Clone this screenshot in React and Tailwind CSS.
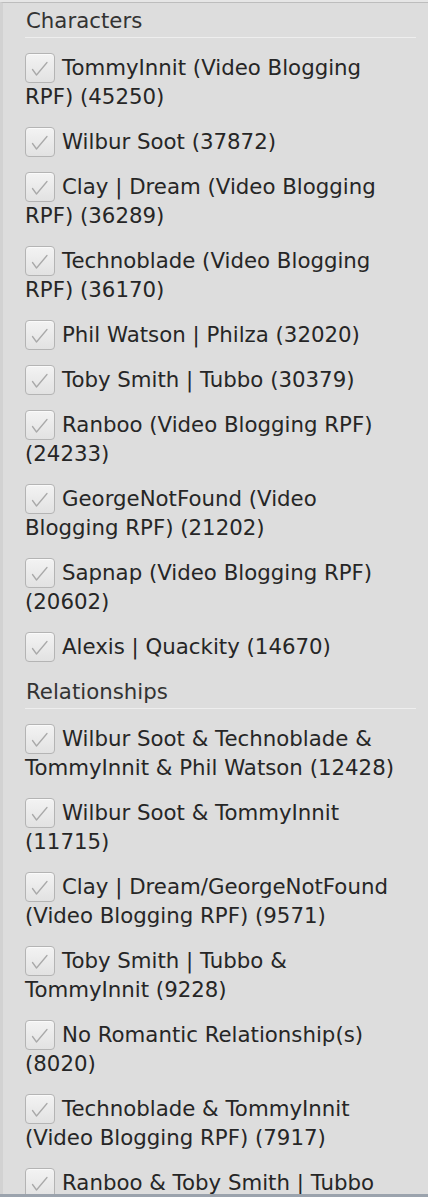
import React from "react";

const characters = [
  "TommyInnit (Video Blogging RPF) (45250)",
  "Wilbur Soot (37872)",
  "Clay | Dream (Video Blogging RPF) (36289)",
  "Technoblade (Video Blogging RPF) (36170)",
  "Phil Watson | Philza (32020)",
  "Toby Smith | Tubbo (30379)",
  "Ranboo (Video Blogging RPF) (24233)",
  "GeorgeNotFound (Video Blogging RPF) (21202)",
  "Sapnap (Video Blogging RPF) (20602)",
  "Alexis | Quackity (14670)",
];

const relationships = [
  "Wilbur Soot & Technoblade & TommyInnit & Phil Watson (12428)",
  "Wilbur Soot & TommyInnit (11715)",
  "Clay | Dream/GeorgeNotFound (Video Blogging RPF) (9571)",
  "Toby Smith | Tubbo & TommyInnit (9228)",
  "No Romantic Relationship(s) (8020)",
  "Technoblade & TommyInnit (Video Blogging RPF) (7917)",
  "Ranboo & Toby Smith | Tubbo (7204)",
  "Clay | Dream & TommyInnit (6831)",
];

// greyed-out checkbox, the way the filter sidebar draws it
const Check = () => (
  <span className="inline-block w-[30px] h-[30px] -my-[1px] align-[-7px] mr-[7px] rounded-[4px] border border-[#b4b4b4] bg-gradient-to-b from-[#f3f3f3] to-[#e2e2e2] shadow-[inset_0_1px_0_#fafafa]">
    <svg className="block" width="28" height="28" viewBox="0 0 28 28">
      <path
        d="M6.5 15.5 L10.5 21 L21 8.5"
        fill="none"
        stroke="#a9a9a9"
        strokeWidth="1.3"
        strokeLinecap="round"
        strokeLinejoin="round"
      />
    </svg>
  </span>
);

const Group = ({ title, items }) => (
  <div>
    <h3 className="leading-[29px] pb-[2px] pl-[1px] border-b border-[#eeeeee] mb-[15px] text-[#333]">
      {title}
    </h3>
    <ul>
      {items.map((item) => (
        <li key={item} className="leading-[29px] mb-[16px] pr-[14px]">
          <Check />
          {item}
        </li>
      ))}
    </ul>
  </div>
);

export default function App() {
  return (
    <div className="h-[1197px] overflow-hidden bg-[#e6e6e6] pt-[2px] border-b-[3px] border-[#9ba3ad]">
      <div
        className="h-full bg-[#dddddd] border-t border-[#bdbdbd] border-l-[3px] border-l-[#d2d2d2] pl-[22px] pr-[12px] pt-[3px] text-[21.3px] text-[#262626]"
        style={{ fontFamily: '"DejaVu Sans", sans-serif' }}
      >
        <Group title="Characters" items={characters} />
        <Group title="Relationships" items={relationships} />
      </div>
    </div>
  );
}
